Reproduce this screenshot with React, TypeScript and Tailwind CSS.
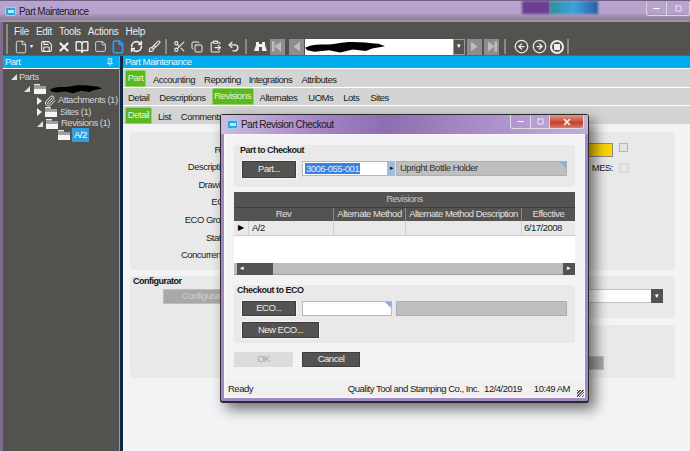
import {
  BookOpen,
  Brush,
  CircleArrowLeft,
  CircleArrowRight,
  ClipboardPaste,
  Copy,
  File,
  Minus,
  Paperclip,
  Pin,
  RefreshCw,
  Save,
  Scissors,
  Square,
  StickyNote,
  Undo2,
  X,
} from 'lucide-react'

const MENU = ['File', 'Edit', 'Tools', 'Actions', 'Help']

const FORM_LABELS = ['Rev:', 'Description:', 'Drawing:', 'ECN:', 'ECO Group:', 'Status:', 'Concurrent #:']

const COLUMNS = [
  { label: 'Alternate Method', width: 'w-[72px]', value: '' },
  { label: 'Alternate Method Description', width: 'w-[116px]', value: '' },
  { label: 'Effective', width: 'w-[54px]', value: '6/17/2008' },
]

function AppIcon() {
  return (
    <span className="w-[11px] h-[9px] rounded-[2px] bg-[#2aa7de] border border-[#8fd6f2] flex items-center justify-center shrink-0">
      <span className="w-[6px] h-[3px] bg-[#bfe8f7]" />
    </span>
  )
}

function Sep({ className = '' }: { className?: string }) {
  return <span className={`w-[2px] h-[15px] bg-[#8a8a8a] shrink-0 ${className}`} />
}

function Tool({ children, className = '' }: { children: React.ReactNode; className?: string }) {
  return <span className={`w-[18px] h-[16px] flex items-center justify-center text-[#ececec] shrink-0 ${className}`}>{children}</span>
}

function Scribble({ className = '' }: { className?: string }) {
  return (
    <svg className={className} viewBox="0 0 100 20" preserveAspectRatio="none">
      <path d="M0 11 C12 5 25 8 38 6 C55 2 72 4 92 6 L100 9 L84 12 L76 15 L60 13 L44 17 L30 14 L12 16 L3 14 Z" fill="#000" />
    </svg>
  )
}

function FolderIcon() {
  return (
    <svg width="12" height="10" viewBox="0 0 12 10" className="shrink-0">
      <rect x="0" y="0" width="6" height="1.5" fill="#e8e8e8" />
      <rect x="0" y="2.5" width="12" height="1" fill="#e8e8e8" />
      <rect x="0" y="4.5" width="12" height="5.5" fill="#f4f4f4" />
    </svg>
  )
}

function Arrow({ open }: { open?: boolean }) {
  return open ? (
    <svg width="6" height="6" viewBox="0 0 6 6" className="shrink-0">
      <path d="M6 0 V6 H0 Z" fill="#e0e0e0" />
    </svg>
  ) : (
    <svg width="5" height="8" viewBox="0 0 5 8" className="shrink-0">
      <path d="M0 0 L5 4 L0 8 Z" fill="#f0f0f0" />
    </svg>
  )
}

function NavButton({ dir, bar }: { dir: 'left' | 'right'; bar?: boolean }) {
  return (
    <span className="w-[15px] h-[16px] bg-[#8d8d8d] flex items-center justify-center shrink-0">
      <svg width="11" height="11" viewBox="0 0 11 11">
        {dir === 'left' ? <path d="M9 0.5 V10.5 L2.5 5.5 Z" fill="#bdbdbd" /> : <path d="M2 0.5 V10.5 L8.5 5.5 Z" fill="#bdbdbd" />}
        {bar && <rect x={dir === 'left' ? 0 : 8.5} y="0.5" width="2.5" height="10" fill="#bdbdbd" />}
      </svg>
    </span>
  )
}

function DarkButton({ children, className = '' }: { children: React.ReactNode; className?: string }) {
  return (
    <span className={`bg-[#555351] border border-[#3e3d3b] outline outline-1 outline-[#f5f5f5] text-[#ececec] flex items-center justify-center shrink-0 ${className}`}>
      {children}
    </span>
  )
}

function Corner() {
  return <span className="absolute top-0 right-0 w-0 h-0 border-l-[6px] border-l-transparent border-t-[6px] border-t-[#86aee0]" />
}

function GroupTitle({ children, className = '' }: { children: React.ReactNode; className?: string }) {
  return <div className={`h-[16px] leading-[11px] font-bold text-[9px] text-[#1a1a1a] ${className}`}>{children}</div>
}

function Modal() {
  return (
    <div className="absolute left-[220px] top-[114px] w-[369px] h-[289px] flex flex-col rounded-[3px] border border-[#2b2b2b] border-b-2 bg-[#a488c6] px-[3px] pb-[3px] shadow-[6px_6px_14px_rgba(0,0,0,0.55)]">
      <div className="h-[19px] shrink-0 flex bg-[linear-gradient(90deg,#cdbddc_0%,#a886c8_25%,#8d6eb0_45%,#a98cc8_70%,#c4aedb_100%)] -mx-[3px] pl-[6px] relative">
        <div className="flex items-center gap-[3px] h-[19px]">
          <AppIcon />
          <span className="text-[10px] tracking-[-0.55px] text-[#1b1b1b]">Part Revision Checkout</span>
        </div>
        <div className="ml-auto mr-[4px] flex h-[14px] border border-t-0 border-[#dcdce4] rounded-b-[3px] overflow-hidden">
          <span className="w-[20px] flex items-center justify-center border-r border-[#dcdce4] text-white">
            <Minus size={9} strokeWidth={3} />
          </span>
          <span className="w-[19px] flex items-center justify-center border-r border-[#dcdce4] text-white">
            <Square size={7} strokeWidth={2.5} />
          </span>
          <span className="w-[33px] flex items-center justify-center bg-[linear-gradient(180deg,#dd9a8d_0%,#c8402c_60%,#d4806e_100%)] text-white">
            <X size={10} strokeWidth={3.5} />
          </span>
        </div>
      </div>

      <div className="flex-1 min-h-0 bg-[#f3f3f5] border border-[#f9f9f9] flex flex-col pt-[10px]">
        <section className="ml-[9px] w-[341px] h-[42px] bg-[#e9e9e9] rounded-[3px] shrink-0">
          <GroupTitle className="pl-[6px]">Part to Checkout</GroupTitle>
          <div className="flex items-start pl-[8px]">
            <DarkButton className="w-[54px] h-[17px]">Part...</DarkButton>
            <div className="ml-[6px] w-[86px] h-[15px] bg-white border border-[#b8b8b8] flex items-center pl-[2px]">
              <span className="bg-[#3b83e0] text-[#dfeaff] leading-[11px] px-[1px]">3006-055-001</span>
            </div>
            <span className="w-[7px] h-[15px] bg-[#9fbddc] flex items-center justify-center text-[#111] text-[7px]">▸</span>
            <div className="relative ml-[1px] w-[171px] h-[15px] bg-[#bfbfbf] border border-[#aeaeae] pl-[3px] flex items-center text-[#333]">
              Upright Bottle Holder
              <Corner />
            </div>
          </div>
        </section>

        <section className="ml-[9px] mt-[5px] w-[341px] h-[83px] bg-white shrink-0 flex flex-col">
          <div className="h-[15px] bg-[#555351] text-[#c8c8c8] flex items-center justify-center">Revisions</div>
          <div className="h-[14px] flex bg-[#555351] text-[#e0e0e0] border-t border-[#3e3d3b]">
            <span className="w-[99px] flex items-center justify-center">Rev</span>
            {COLUMNS.map((c) => (
              <span key={c.label} className={`${c.width} border-l border-[#8b8b8b] flex items-center justify-center whitespace-nowrap overflow-hidden`}>
                {c.label}
              </span>
            ))}
          </div>
          <div className="h-[15px] flex bg-[#e9e9e9] border-b border-[#cfcfcf] text-[#222]">
            <span className="w-[14px] flex items-center justify-center text-[8px] text-black">▶</span>
            <span className="w-[85px] border-l border-[#cfcfcf] pl-[3px] flex items-center">A/2</span>
            {COLUMNS.map((c) => (
              <span key={c.label} className={`${c.width} border-l border-[#cfcfcf] pl-[2px] flex items-center whitespace-nowrap`}>
                {c.value}
              </span>
            ))}
          </div>
          <div className="flex-1" />
          <div className="h-[12px] bg-[#bcbcbc] flex items-center pl-[3px] border-b border-[#9d9d9d]">
            <span className="w-[36px] h-[12px] bg-[#555351] flex items-center pl-[3px] text-white text-[7px]">◂</span>
            <span className="ml-auto w-[12px] h-[12px] bg-[#555351] flex items-center justify-center text-white text-[7px]">▸</span>
          </div>
        </section>

        <section className="ml-[9px] mt-[10px] w-[341px] h-[58px] bg-[#e9e9e9] rounded-[3px] shrink-0">
          <GroupTitle className="pl-[3px]">Checkout to ECO</GroupTitle>
          <div className="flex items-start pl-[8px]">
            <DarkButton className="w-[54px] h-[15px]">ECO...</DarkButton>
            <div className="relative ml-[6px] w-[90px] h-[15px] bg-white border border-[#b8b8b8]">
              <Corner />
            </div>
            <div className="ml-[4px] w-[171px] h-[15px] bg-[#bfbfbf] border border-[#aeaeae]" />
          </div>
          <DarkButton className="ml-[8px] mt-[6px] w-[77px] h-[16px]">New ECO...</DarkButton>
        </section>

        <div className="flex ml-[9px] mt-[9px] gap-[9px] shrink-0">
          <span className="w-[59px] h-[15px] bg-[#dcdcdc] text-[#a5a5a5] flex items-center justify-center">OK</span>
          <DarkButton className="w-[58px] h-[15px]">Cancel</DarkButton>
        </div>

        <div className="mt-auto h-[15px] bg-[#f0f0f0] flex items-center pl-[3px] pr-[14px] text-[#222] relative shrink-0">
          <span>Ready</span>
          <span className="ml-auto whitespace-nowrap">Quality Tool and Stamping Co., Inc.</span>
          <span className="ml-[5px]">12/4/2019</span>
          <span className="ml-[12px]">10:49 AM</span>
          <span className="absolute right-0 bottom-0 w-[7px] h-[7px] bg-[repeating-linear-gradient(135deg,#555_0,#555_1px,transparent_1px,transparent_2px)]" />
        </div>
      </div>
    </div>
  )
}

export default function App() {
  return (
    <div className="relative w-[690px] h-[451px] overflow-hidden bg-[#54524f] flex flex-col font-['Liberation_Sans',sans-serif] text-[9.5px] tracking-[-0.5px]">
      {/* window title */}
      <div className="relative h-[22px] shrink-0 flex items-center pl-[5px] gap-[3px] border-t border-[#6e6284] bg-[linear-gradient(180deg,#b9a3cf_0%,#b8a2cc_55%,#8e8198_85%,#a394b3_100%)]">
        <span className="absolute left-[522px] top-0 w-[28px] h-[13px] bg-[#6d3f93] blur-[1px]" />
        <span className="absolute left-[550px] top-0 w-[48px] h-[13px] bg-[linear-gradient(90deg,#2f8f9c,#3aa3dd,#2d5da0)] blur-[1px]" />
        <AppIcon />
        <span className="text-[10px] tracking-[-0.55px] text-[#1c1c1c]">Part Maintenance</span>
        <div className="absolute right-0 top-[1px] flex h-[14px] border border-t-0 border-[#d8d8e0] rounded-b-[3px]">
          <span className="w-[20px] flex items-center justify-center border-r border-[#d8d8e0] text-white">
            <Minus size={9} strokeWidth={3} />
          </span>
          <span className="w-[22px] flex items-center justify-center text-white">
            <Square size={7} strokeWidth={2.5} />
          </span>
        </div>
      </div>

      <div className="flex flex-1 min-h-0">
        <div className="w-[3px] bg-[#7b6d8b] shrink-0" />
        <div className="flex-1 min-w-0 flex flex-col">
          {/* menu */}
          <div className="h-[16px] shrink-0 flex items-center pl-[3px] pt-[2px] text-[#ececec] text-[10px] tracking-[-0.3px]">
            <Sep className="h-[12px] mr-[6px]" />
            {MENU.map((m) => (
              <span key={m} className="mr-[7px]">
                {m}
              </span>
            ))}
          </div>

          {/* toolbar */}
          <div className="h-[18px] shrink-0 flex items-center pl-[3px] border-b border-[#7a5b48]">
            <Sep className="mr-[4px]" />
            <Tool>
              <File size={14} strokeWidth={1.5} />
            </Tool>
            <span className="text-white text-[6px] w-[6px]">▾</span>
            <Tool className="ml-[1px]">
              <Save size={13} />
            </Tool>
            <Tool>
              <X size={14} strokeWidth={4} />
            </Tool>
            <Tool>
              <BookOpen size={14} strokeWidth={2.5} />
            </Tool>
            <Tool>
              <StickyNote size={13} strokeWidth={1.5} />
            </Tool>
            <Tool className="!text-[#3b97e6]">
              <File size={14} strokeWidth={3} />
            </Tool>
            <Tool>
              <RefreshCw size={13} strokeWidth={3} />
            </Tool>
            <Tool>
              <Brush size={13} strokeWidth={2} />
            </Tool>
            <Sep className="ml-[2px] mr-[3px]" />
            <Tool>
              <Scissors size={13} />
            </Tool>
            <Tool>
              <Copy size={12} />
            </Tool>
            <Tool>
              <ClipboardPaste size={13} />
            </Tool>
            <Tool>
              <Undo2 size={13} strokeWidth={2.5} />
            </Tool>
            <Sep className="mx-[3px]" />
            <Tool className="ml-[1px] mr-[1px]">
              <svg width="13" height="12" viewBox="0 0 13 12">
                <path d="M2 1h3v2h3V1h3v3l2 6H8V6H5v4H0l2-6z" fill="#f0f0f0" />
              </svg>
            </Tool>
            <NavButton dir="left" bar />
            <span className="w-[4px]" />
            <NavButton dir="left" />
            <div className="relative ml-[1px] w-[148px] h-[16px] bg-white shrink-0">
              <Scribble className="absolute left-0 top-0 w-[80px] h-[16px]" />
            </div>
            <span className="w-[12px] h-[16px] bg-[#555351] border border-[#999] flex items-center justify-center text-white text-[7px] shrink-0">▾</span>
            <span className="w-[2px]" />
            <NavButton dir="right" />
            <span className="w-[2px]" />
            <NavButton dir="right" bar />
            <Sep className="ml-[5px] mr-[6px]" />
            <Tool>
              <CircleArrowLeft size={15} />
            </Tool>
            <Tool>
              <CircleArrowRight size={15} />
            </Tool>
            <Tool>
              <span className="w-[14px] h-[14px] rounded-full border-2 border-[#eee] flex items-center justify-center">
                <span className="w-[6px] h-[6px] bg-[#eee]" />
              </span>
            </Tool>
            <Sep className="ml-[1px]" />
          </div>

          <div className="flex flex-1 min-h-0">
            {/* tree panel */}
            <aside className="w-[117px] shrink-0 border-r border-[#9a9a9a] flex flex-col text-[#d4d4d4] whitespace-nowrap">
              <div className="h-[13px] bg-[#00adef] border-b border-white pl-[2px] pr-[5px] flex items-center justify-between text-[#eaf6ff] shrink-0">
                Part
                <Pin size={8} strokeWidth={3} />
              </div>
              <div className="pt-[2px] flex flex-col">
                <div className="h-[12px] pl-[8px] flex items-center gap-[2px]">
                  <Arrow open />
                  Parts
                </div>
                <div className="h-[12px] pl-[21px] flex items-center gap-[4px]">
                  <Arrow open />
                  <FolderIcon />
                  <Scribble className="w-[52px] h-[12px]" />
                </div>
                <div className="h-[11px] pl-[34px] flex items-center gap-[2px]">
                  <Arrow />
                  <Paperclip size={12} className="shrink-0 text-[#e8e8e8]" />
                  <span>Attachments (1)</span>
                </div>
                <div className="h-[12px] pl-[34px] flex items-center gap-[3px]">
                  <Arrow />
                  <FolderIcon />
                  <span>Sites (1)</span>
                </div>
                <div className="h-[11px] pl-[34px] flex items-center gap-[3px]">
                  <Arrow open />
                  <FolderIcon />
                  <span>Revisions (1)</span>
                </div>
                <div className="h-[12px] pl-[55px] flex items-center gap-[2px]">
                  <FolderIcon />
                  <span className="bg-[#2f9fdd] text-white px-[2px]">A/2</span>
                </div>
              </div>
            </aside>
            <div className="w-[3px] bg-[#0b2a44] shrink-0" />

            {/* main panel */}
            <main className="flex-1 min-w-0 flex flex-col bg-[#f3f3f5] text-[#222]">
              <div className="h-[13px] bg-[#00adef] border-b border-white pl-[2px] flex items-center text-[#eaf6ff] shrink-0">Part Maintenance</div>

              <div className="h-[19px] bg-[#d4d4d4] border-b border-white flex items-end pl-[2px] shrink-0">
                <span className="w-[21px] h-[17px] bg-[#5cb81e] border border-[#93d46a] rounded-t-[2px] text-[#e8f7da] flex items-center justify-center">Part</span>
                <span className="ml-[7px] mr-[9px]">Accounting</span>
                <span className="mr-[8px]">Reporting</span>
                <span className="mr-[9px]">Integrations</span>
                <span>Attributes</span>
              </div>

              <div className="h-[18px] bg-[#d4d4d4] border-b border-white flex items-end pl-[5px] shrink-0">
                <span className="mr-[10px]">Detail</span>
                <span className="mr-[6px]">Descriptions</span>
                <span className="w-[42px] h-[17px] bg-[#5cb81e] border border-[#93d46a] rounded-t-[2px] text-[#e8f7da] flex items-center justify-center">Revisions</span>
                <span className="ml-[6px] mr-[11px]">Alternates</span>
                <span className="mr-[10px]">UOMs</span>
                <span className="mr-[11px]">Lots</span>
                <span>Sites</span>
              </div>

              <div className="h-[18px] bg-[#d4d4d4] flex items-end pl-[2px] shrink-0">
                <span className="w-[27px] h-[17px] bg-[#5cb81e] border border-[#93d46a] rounded-t-[2px] text-[#e8f7da] flex items-center justify-center">Detail</span>
                <span className="ml-[6px] mr-[10px]">List</span>
                <span>Comments</span>
              </div>

              <div className="flex-1 min-h-0 pl-[7px] pt-[8px] pr-[15px]">
                {/* form card */}
                <section className="h-[138px] bg-[#e9e9e9] rounded-[3px] relative pt-[9px]">
                  <div className="w-[102px] flex flex-col items-end">
                    {FORM_LABELS.map((l) => (
                      <span key={l} className="h-[17.6px] flex items-center whitespace-nowrap">
                        {l}
                      </span>
                    ))}
                  </div>
                  <div className="absolute left-[430px] top-[11px] flex items-start gap-[6px]">
                    <span className="w-[53px] h-[14px] bg-[#ffd400] border border-[#8a8a8a]" />
                    <span className="w-[9px] h-[9px] bg-[#e4e4e4] border border-[#b5b5b5]" />
                  </div>
                  <div className="absolute left-[461px] top-[29px] flex items-center gap-[6px]">
                    <span className="w-[22px] text-right">MES:</span>
                    <span className="w-[10px] h-[10px] bg-[#e4e4e4] border border-[#d4d4d4]" />
                  </div>
                </section>

                <div className="flex mt-[6px] gap-[4px]">
                  <section className="w-[200px] h-[102px] bg-[#e9e9e9] rounded-[3px] pl-[3px] shrink-0">
                    <div className="h-[13px] leading-[10px] font-bold text-[9px] text-[#111]">Configurator</div>
                    <div className="ml-[30px] w-[84px] h-[15px] bg-[#a8a8a8] border border-[#bdbdbd] text-[#cfcfcf] flex items-center justify-center">Configurator</div>
                  </section>
                  <div className="flex-1 min-w-0 flex flex-col gap-[7px]">
                    <section className="h-[42px] bg-[#e9e9e9] rounded-[3px] pt-[13px] pl-[10px] pr-[12px] flex items-start">
                      <span className="flex-1 h-[14px] bg-white border-y border-[#c4c4c4]" />
                      <span className="w-[12px] h-[14px] bg-[#555351] flex items-center justify-center text-white text-[7px]">▾</span>
                    </section>
                    <section className="h-[53px] bg-[#e9e9e9] rounded-[3px] pt-[31px] pr-[71px] flex justify-end">
                      <span className="w-[100px] h-[14px] bg-[#a8a8a8] border border-[#bdbdbd]" />
                    </section>
                  </div>
                </div>
              </div>
            </main>
          </div>
        </div>
      </div>

      <Modal />
    </div>
  )
}
